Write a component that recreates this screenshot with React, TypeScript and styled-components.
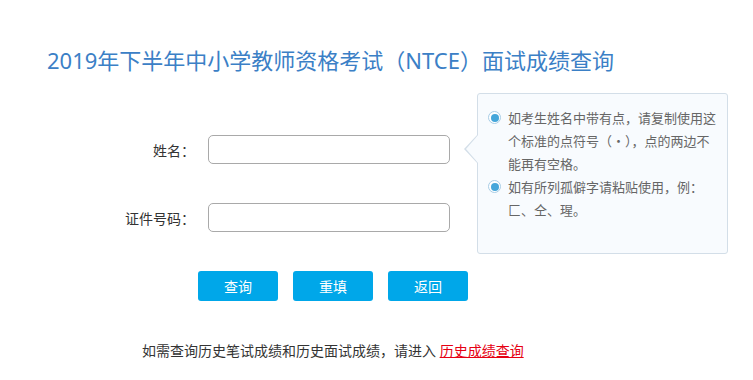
import React from 'react';
import styled, { createGlobalStyle } from 'styled-components';

const GlobalStyle = createGlobalStyle`
  body {
    margin: 0;
    background: #fff;
    font-family: "Noto Sans", "Noto Sans CJK SC", sans-serif;
  }
`;

const Page = styled.div`
  padding: 44px 0 0 47px;
`;

const Title = styled.h1`
  margin: 0;
  font-size: 22px;
  line-height: 32px;
  font-weight: normal;
  color: #3b80c6;
`;

const Main = styled.div`
  display: flex;
  align-items: flex-start;
  margin-top: 17px;
`;

const FormColumn = styled.div`
  flex: none;
  width: 403px;
  padding-top: 42px;
`;

const Fields = styled.div`
  display: grid;
  grid-template-columns: 148px 242px;
  column-gap: 13px;
  row-gap: 39px;
  align-items: center;
`;

const Label = styled.label`
  text-align: right;
  font-size: 14px;
  color: #333;
`;

const Input = styled.input`
  box-sizing: border-box;
  width: 242px;
  height: 29px;
  border: 1px solid #a9a9a9;
  border-radius: 5px;
  background: #fff;
  outline: none;
  padding: 0 8px;
  font-size: 14px;
`;

const Buttons = styled.div`
  display: flex;
  gap: 15px;
  margin-top: 39px;
  padding-left: 151px;
`;

const Button = styled.button`
  flex: none;
  width: 80px;
  height: 30px;
  border: 0;
  border-radius: 3px;
  background: #00a7e9;
  color: #fff;
  font-family: inherit;
  font-size: 14px;
  cursor: pointer;
`;

const Tip = styled.div`
  position: relative;
  flex: none;
  box-sizing: border-box;
  width: 251px;
  height: 161px;
  margin-left: 27px;
  padding: 12px 8px 0 10px;
  border: 1px solid #d3dee8;
  border-radius: 3px;
  background: #f8fbfe;
  font-family: "Noto Sans CJK SC", sans-serif;

  &::before,
  &::after {
    content: '';
    position: absolute;
    top: 40px;
    width: 0;
    height: 0;
    border-style: solid;
    border-color: transparent;
  }
  &::before {
    left: -14px;
    border-width: 15px 14px 15px 0;
    border-right-color: #d3dee8;
  }
  &::after {
    left: -12px;
    border-width: 15px 13px 15px 0;
    border-right-color: #f8fbfe;
  }
`;

const TipItem = styled.div`
  display: flex;
  align-items: flex-start;
  gap: 7px;
`;

const Bullet = styled.span`
  flex: none;
  box-sizing: border-box;
  width: 13px;
  height: 13px;
  margin-top: 5px;
  border: 1px solid #a8cde6;
  border-radius: 50%;
  display: flex;
  align-items: center;
  justify-content: center;
  background: #fff;

  &::after {
    content: '';
    width: 8px;
    height: 8px;
    border-radius: 50%;
    background: #45a6da;
  }
`;

const TipText = styled.p`
  margin: 0;
  width: 210px;
  font-size: 13px;
  line-height: 23px;
  color: #666;
`;

const Note = styled.p`
  margin: 40px 0 0;
  padding-left: 95px;
  font-size: 14px;
  line-height: 20px;
  color: #333;
`;

const HistoryLink = styled.a`
  color: #e60012;
  text-decoration: underline;
`;

const App: React.FC = () => (
  <Page>
    <GlobalStyle />
    <Title>2019年下半年中小学教师资格考试（NTCE）面试成绩查询</Title>
    <Main>
      <FormColumn>
        <Fields>
          <Label htmlFor="name">姓名：</Label>
          <Input id="name" />
          <Label htmlFor="idno">证件号码：</Label>
          <Input id="idno" />
        </Fields>
        <Buttons>
          <Button>查询</Button>
          <Button>重填</Button>
          <Button>返回</Button>
        </Buttons>
      </FormColumn>
      <Tip>
        <TipItem>
          <Bullet />
          <TipText>如考生姓名中带有点，请复制使用这个标准的点符号（·），点的两边不能再有空格。</TipText>
        </TipItem>
        <TipItem>
          <Bullet />
          <TipText>如有所列孤僻字请粘贴使用，例：匚、仝、瑆。</TipText>
        </TipItem>
      </Tip>
    </Main>
    <Note>
      如需查询历史笔试成绩和历史面试成绩，请进入 <HistoryLink href="#">历史成绩查询</HistoryLink>
    </Note>
  </Page>
);

export default App;
